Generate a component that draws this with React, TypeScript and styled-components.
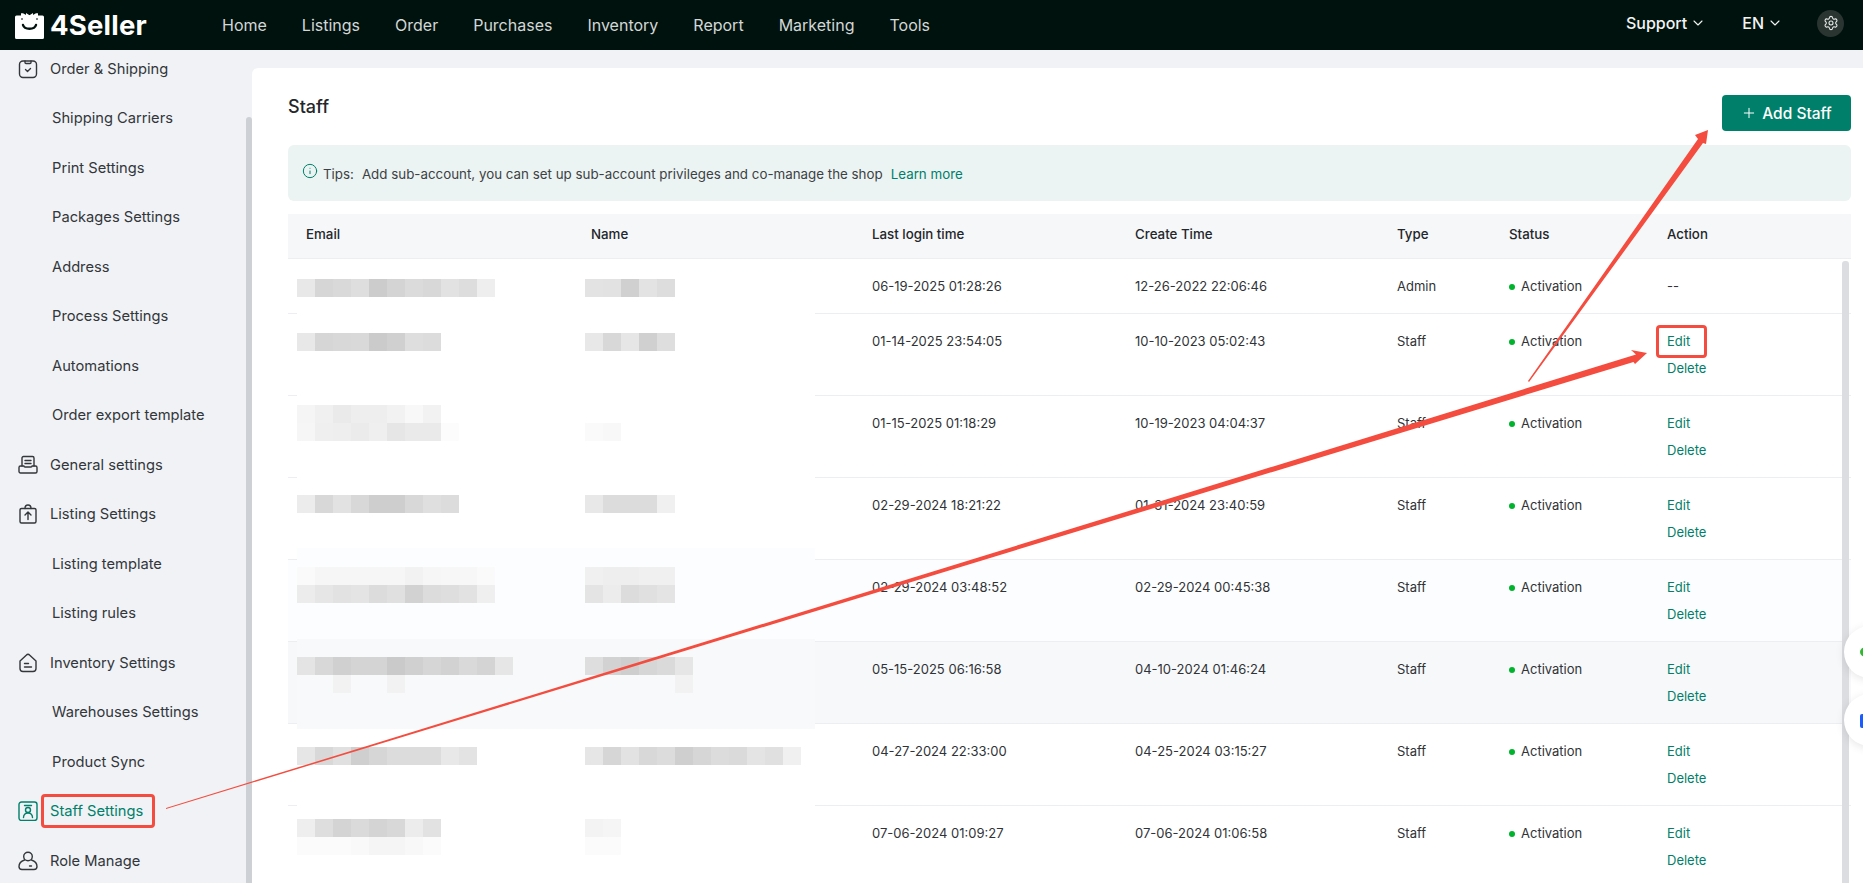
import React from 'react';
import styled, { createGlobalStyle } from 'styled-components';
import { ChevronDown, Plus, Settings, Info } from 'lucide-react';

const GlobalStyle = createGlobalStyle`
	html, body {
		margin: 0;
		height: 100%;
		overflow: hidden;
		background: #f0f2f6;
		font-family: Inter, 'Noto Sans', sans-serif;
	}
	*, *::before, *::after {
		box-sizing: border-box;
	}
`;

const Page = styled.div`
	position: relative;
	width: 1863px;
	height: 883px;
	overflow: hidden;
`;

const Header = styled.header`
	display: flex;
	align-items: center;
	height: 50px;
	padding-left: 15px;
	background: #00120e;
`;

const Brand = styled.div`
	display: flex;
	align-items: center;
	gap: 6px;
	width: 207px;
	color: #fff;
	font-size: 27.5px;
	font-weight: 700;
	letter-spacing: 0.2px;
`;

const Nav = styled.nav`
	display: flex;
	gap: 35px;
`;

const NavLink = styled.a`
	color: #d3d7d6;
	font-size: 16px;
	line-height: 45px;
`;

const HeaderRight = styled.div`
	display: flex;
	align-items: center;
	margin-left: auto;
	padding: 0 19px 4px 0;
	color: #f2f4f3;
	font-size: 16px;
	font-weight: 500;
`;

const Menu = styled.div<{ $gap: number }>`
	display: flex;
	align-items: center;
	gap: 3px;
	margin-right: ${(p) => p.$gap}px;
`;

const GearButton = styled.div`
	display: flex;
	align-items: center;
	justify-content: center;
	width: 27px;
	height: 27px;
	border-radius: 50%;
	background: #2a3532;
`;

const Body = styled.div`
	display: flex;
	height: 833px;
`;

const Sidebar = styled.aside`
	position: relative;
	flex: 0 0 252px;
	overflow: hidden;
`;

const SideList = styled.div`
	margin-top: -6.2px;
`;

const SideItem = styled.div<{ $sub?: boolean; $active?: boolean }>`
	display: flex;
	align-items: center;
	gap: 12px;
	height: 49.5px;
	padding-left: ${(p) => (p.$sub ? '52px' : '18px')};
	color: ${(p) => (p.$active ? '#00806a' : '#33363a')};
	font-size: 14.7px;
`;

const SideLabel = styled.span<{ $marked?: boolean }>`
	position: relative;
	${(p) =>
		p.$marked &&
		`
		&::after {
			content: '';
			position: absolute;
			left: -9px;
			right: -12px;
			top: -8px;
			bottom: -8px;
			border: 3px solid #f44c3e;
			border-radius: 4px;
		}
	`}
`;

const SideScrollbar = styled.div`
	position: absolute;
	top: 67px;
	bottom: 0;
	right: 0;
	width: 6px;
	background: #cdd0d4;
	border-radius: 3px 3px 0 0;
`;

const Panel = styled.main`
	flex: 1;
	margin-top: 18px;
	padding: 27px 12px 0 36px;
	background: #fff;
	border-radius: 6px 0 0 0;
`;

const TitleRow = styled.div`
	display: flex;
	justify-content: space-between;
	height: 36px;
`;

const Title = styled.h1`
	margin: 0;
	color: #23262a;
	font-size: 18px;
	font-weight: 500;
	line-height: 24px;
`;

const AddButton = styled.button`
	display: flex;
	align-items: center;
	justify-content: center;
	gap: 5px;
	width: 129px;
	height: 36px;
	padding: 0;
	border: 0;
	border-radius: 4px;
	background: #00806a;
	color: #fff;
	font-family: inherit;
	font-size: 15.5px;
	font-weight: 500;
`;

const Tips = styled.div`
	display: flex;
	align-items: center;
	height: 56px;
	margin-top: 14px;
	padding: 2px 0 0 14px;
	border-radius: 6px;
	background: #ebf4f2;
	color: #3d4145;
	font-size: 13.35px;
`;

const TipsIcon = styled(Info)`
	margin: -6px 5px 0 0;
	color: #00806a;
`;

const TipsLabel = styled.span`
	margin-right: 8px;
`;

const LearnMore = styled.a`
	margin-left: 8px;
	color: #00806a;
`;

const TableWrap = styled.div`
	position: relative;
	margin-top: 13px;
`;

const Cols = `
	display: grid;
	grid-template-columns: 285px 281px 263px 262px 112px 158px 202px;
`;

const HeadRow = styled.div`
	${Cols}
	align-items: center;
	height: 45px;
	padding-bottom: 4px;
	background: #f6f7f9;
	border-bottom: 1px solid #eceef2;
	color: #23262a;
	font-size: 13.3px;
	font-weight: 500;
`;

const HeadCell = styled.div`
	padding-left: 18px;
`;

const Row = styled.div<{ $bg?: string; $veil?: string; $veilTop?: string; $veilBottom?: string }>`
	${Cols}
	position: relative;
	padding: 14px 0 13px;
	background: ${(p) => p.$bg ?? 'transparent'};
	border-bottom: 1px solid #eceef2;
	color: #303337;
	font-size: 13px;
	line-height: 27px;
	&::before {
		content: '';
		position: absolute;
		left: 9px;
		width: 518px;
		top: ${(p) => p.$veilTop ?? '100%'};
		bottom: ${(p) => p.$veilBottom ?? '-1px'};
		background: ${(p) => p.$veil ?? '#fff'};
	}
`;

const Cell = styled.div`
	position: relative;
	z-index: 1;
	padding-left: 18px;
`;

const Mosaic = styled.div<{ $left: number; $top: number }>`
	display: flex;
	flex-direction: column;
	margin-left: ${(p) => p.$left}px;
	margin-top: ${(p) => p.$top}px;
`;

const MosaicRow = styled.div`
	display: flex;
	height: 18px;
`;

const MosaicCell = styled.span<{ $tone: string }>`
	width: 18px;
	height: 18px;
	background: ${(p) => (p.$tone ? `#${p.$tone}${p.$tone}${p.$tone}` : 'transparent')};
`;

const Status = styled.div`
	display: flex;
	align-items: center;
	gap: 6px;
`;

const Dot = styled.i`
	width: 6px;
	height: 6px;
	border-radius: 50%;
	background: #00b32c;
`;

const ActionLink = styled.a<{ $marked?: boolean }>`
	display: block;
	position: relative;
	width: fit-content;
	color: #00806a;
	${(p) =>
		p.$marked &&
		`
		&::after {
			content: '';
			position: absolute;
			left: -11px;
			width: 51px;
			top: -3px;
			height: 33px;
			border: 3px solid #f44c3e;
			border-radius: 4px;
		}
	`}
`;

const TableScrollbar = styled.div`
	position: absolute;
	z-index: 2;
	top: 47px;
	right: 2px;
	bottom: -400px;
	width: 7px;
	background: #dcdde0;
	border-radius: 3px;
`;

const FloatButton = styled.div<{ $top: number; $color: string; $square?: boolean }>`
	position: absolute;
	left: 1844px;
	top: ${(p) => p.$top}px;
	width: 52px;
	height: 52px;
	border-radius: 50%;
	background: #fff;
	box-shadow: 0 2px 10px rgba(0, 0, 0, 0.1);
	z-index: 3;
	&::after {
		content: '';
		position: absolute;
		left: 16px;
		top: ${(p) => (p.$square ? '20px' : '21px')};
		width: 12px;
		height: ${(p) => (p.$square ? '14px' : '10px')};
		border-radius: ${(p) => (p.$square ? '2px' : '50%')};
		background: ${(p) => p.$color};
	}
`;

const Annotations = styled.svg`
	position: absolute;
	inset: 0;
	z-index: 4;
	pointer-events: none;
`;

const Logo = () => (
	<svg width="29" height="27" viewBox="0 0 29 27">
		<path
			d="M1.5 3.5H6V1.2L8 1.2 12 3.5h5l4-2.3 2 0V3.5h4.5A1.5 1.5 0 0 1 29 5v20.5a1.5 1.5 0 0 1-1.5 1.5h-26A1.5 1.5 0 0 1 0 25.5V5a1.5 1.5 0 0 1 1.5-1.5z"
			fill="#fff"
		/>
		<path d="M11 1l3.5 2.2L18 1v5l-3.5-2L11 6z" fill="#fff" />
		<path d="M7 6v2M22 6v2" stroke="#00120e" strokeWidth="1" />
		<path d="M8 13c1.5 5 11.5 5 13 0" fill="none" stroke="#00120e" strokeWidth="2.4" strokeLinecap="round" />
	</svg>
);

const iconProps = {
	width: 20,
	height: 20,
	viewBox: '0 0 20 20',
	fill: 'none',
	stroke: 'currentColor',
	strokeWidth: 1.4,
	strokeLinecap: 'round' as const,
	strokeLinejoin: 'round' as const,
};

const OrderIcon = () => (
	<svg {...iconProps}>
		<rect x="1.5" y="2" width="17" height="16.5" rx="3.5" />
		<path d="M7 2v1.5a1 1 0 0 0 1 1h4a1 1 0 0 0 1-1V2" />
		<path d="M7.5 10.5l2 2 3-3" />
	</svg>
);

const GeneralIcon = () => (
	<svg {...iconProps}>
		<path d="M4 11V3a1.5 1.5 0 0 1 1.5-1.5h9A1.5 1.5 0 0 1 16 3v8" />
		<path d="M7 5.5h6M7 8.5h6" />
		<path d="M1 12.5A1.5 1.5 0 0 1 2.5 11H6a1 1 0 0 0 1 1h6a1 1 0 0 0 1-1h3.5A1.5 1.5 0 0 1 19 12.5v4A1.5 1.5 0 0 1 17.5 18h-15A1.5 1.5 0 0 1 1 16.5z" />
	</svg>
);

const ListingIcon = () => (
	<svg {...iconProps}>
		<rect x="2" y="4.5" width="16" height="14.5" rx="1.5" />
		<path d="M7 4.5C7 2.5 8 1 10 1s3 1.5 3 3.5" />
		<path d="M10 15.5v-7M7 11l3-3 3 3" />
	</svg>
);

const InventoryIcon = () => (
	<svg {...iconProps}>
		<path d="M2 8l6.5-6a2 2 0 0 1 3 0L18 8v7.5a3 3 0 0 1-3 3H5a3 3 0 0 1-3-3z" />
		<path d="M6.5 10.5h4M6.5 14h7" />
	</svg>
);

const StaffIcon = () => (
	<svg {...iconProps}>
		<rect x="1" y="1" width="18" height="18.5" rx="2.5" />
		<path d="M6.5 4.5h7" />
		<circle cx="10" cy="9" r="2.5" />
		<path d="M5.5 16.5c0-6 9-6 9 0" />
	</svg>
);

const RoleIcon = () => (
	<svg {...iconProps}>
		<circle cx="10" cy="5.5" r="4.3" />
		<path d="M6.5 9c-3 1-5.5 3.5-5.5 6.5 0 2 1 3 3 3h12c2 0 3-1 3-3 0-3-2.5-5.500-5.5-6.5" />
		<path d="M11.5 15h2" />
	</svg>
);

const navItems = ['Home', 'Listings', 'Order', 'Purchases', 'Inventory', 'Report', 'Marketing', 'Tools'];

const sideItems: { label: string; icon?: React.ReactNode; active?: boolean }[] = [
	{ label: 'Order & Shipping', icon: <OrderIcon /> },
	{ label: 'Shipping Carriers' },
	{ label: 'Print Settings' },
	{ label: 'Packages Settings' },
	{ label: 'Address' },
	{ label: 'Process Settings' },
	{ label: 'Automations' },
	{ label: 'Order export template' },
	{ label: 'General settings', icon: <GeneralIcon /> },
	{ label: 'Listing Settings', icon: <ListingIcon /> },
	{ label: 'Listing template' },
	{ label: 'Listing rules' },
	{ label: 'Inventory Settings', icon: <InventoryIcon /> },
	{ label: 'Warehouses Settings' },
	{ label: 'Product Sync' },
	{ label: 'Staff Settings', icon: <StaffIcon />, active: true },
	{ label: 'Role Manage', icon: <RoleIcon /> },
];

type Staff = {
	email: string[][];
	emailTop: number;
	name: string[][];
	nameTop: number;
	login: string;
	created: string;
	type: string;
	bg?: string;
	veil?: string;
	veilTop?: string;
	veilBottom?: string;
};

const tones = (s: string) => s.split(' ').map((t) => (t === '--' ? '' : t));

const staff: Staff[] = [
	{
		email: [tones('e8 d6 d9 de cc d4 db d8 e2 dd ee')],
		emailTop: 6,
		name: [tones('e3 e2 d0 e3 dd')],
		nameTop: 6,
		login: '06-19-2025 01:28:26',
		created: '12-26-2022 22:06:46',
		type: 'Admin',
	},
	{
		email: [tones('e8 d6 d8 d9 cb d0 de dc')],
		emailTop: 5,
		name: [tones('e8 d8 e6 d0 de')],
		nameTop: 5,
		login: '01-14-2025 23:54:05',
		created: '10-10-2023 05:02:43',
		type: 'Staff',
	},
	{
		email: [tones('f5 f0 ea ee ee f2 f8 f2'), tones('f6 ef ee eb ef e6 ea ea fc')],
		emailTop: -5,
		name: [tones('--'), tones('fa f8')],
		nameTop: -5,
		login: '01-15-2025 01:18:29',
		created: '10-19-2023 04:04:37',
		type: 'Staff',
	},
	{
		email: [tones('ec d8 e2 d8 ce ce d8 df dc')],
		emailTop: 3,
		name: [tones('e8 dc dc dc f0')],
		nameTop: 3,
		login: '02-29-2024 18:21:22',
		created: '01-31-2024 23:40:59',
		type: 'Staff',
	},
	{
		email: [tones('fa f6 f6 f6 f6 f6 f2 f6 f7 f7 fa'), tones('ec e6 e2 e4 dc e0 d2 dc de e2 ef')],
		emailTop: -7,
		name: [tones('f0 ee ee f0 f0'), tones('e4 ec dc e0 e4')],
		nameTop: -7,
		login: '02-29-2024 03:48:52',
		created: '02-29-2024 00:45:38',
		type: 'Staff',
		bg: '#fcfdfe',
		veil: '#fcfdfe',
		veilTop: '-12px',
		veilBottom: '-1px',
	},
	{
		email: [tones('e4 d8 d0 d4 d4 ca d0 d6 d2 d9 d4 e6'), tones('-- -- f2 -- -- f2')],
		emailTop: 1,
		name: [tones('de d2 ce d6 da e6'), tones('-- -- -- -- -- f2')],
		nameTop: 1,
		login: '05-15-2025 06:16:58',
		created: '04-10-2024 01:46:24',
		type: 'Staff',
		bg: '#f7f8fa',
		veil: '#f8f9fb',
		veilTop: '-3px',
		veilBottom: '-6px',
	},
	{
		email: [tones('e6 d8 e0 cf d6 dc dc dc e8 e3')],
		emailTop: 9,
		name: [tones('e6 d6 e2 d8 dc cf d6 dc da e4 e0 f0')],
		nameTop: 9,
		login: '04-27-2024 22:33:00',
		created: '04-25-2024 03:15:27',
		type: 'Staff',
	},
	{
		email: [tones('ee de d4 da d4 d8 ec e2'), tones('fb fb fb f9 f5 f5 f8 fb')],
		emailTop: -1,
		name: [tones('f3 f5'), tones('fb fb')],
		nameTop: -1,
		login: '07-06-2024 01:09:27',
		created: '07-06-2024 01:06:58',
		type: 'Staff',
	},
];

const Blur = ({ rows, left, top }: { rows: string[][]; left: number; top: number }) => (
	<Mosaic $left={left} $top={top}>
		{rows.map((cells, r) => (
			<MosaicRow key={r}>
				{cells.map((tone, c) => (
					<MosaicCell key={c} $tone={tone} />
				))}
			</MosaicRow>
		))}
	</Mosaic>
);

const App = function () {
	return (
		<Page>
			<GlobalStyle />
			<Header>
				<Brand>
					<Logo />
					4Seller
				</Brand>
				<Nav>
					{navItems.map((item) => (
						<NavLink key={item}>{item}</NavLink>
					))}
				</Nav>
				<HeaderRight>
					<Menu $gap={36}>
						Support
						<ChevronDown size={16} strokeWidth={1.6} />
					</Menu>
					<Menu $gap={34}>
						EN
						<ChevronDown size={16} strokeWidth={1.6} />
					</Menu>
					<GearButton>
						<Settings size={16} color="#e8ecea" strokeWidth={1.6} />
					</GearButton>
				</HeaderRight>
			</Header>
			<Body>
				<Sidebar>
					<SideList>
						{sideItems.map((item) => (
							<SideItem key={item.label} $sub={!item.icon} $active={item.active}>
								{item.icon}
								<SideLabel $marked={item.active}>{item.label}</SideLabel>
							</SideItem>
						))}
					</SideList>
					<SideScrollbar />
				</Sidebar>
				<Panel>
					<TitleRow>
						<Title>Staff</Title>
						<AddButton>
							<Plus size={16} strokeWidth={1.5} />
							Add Staff
						</AddButton>
					</TitleRow>
					<Tips>
						<TipsIcon size={16} strokeWidth={1.5} />
						<TipsLabel>Tips:</TipsLabel>
						<span>Add sub-account, you can set up sub-account privileges and co-manage the shop</span>
						<LearnMore>Learn more</LearnMore>
					</Tips>
					<TableWrap>
						<HeadRow>
							<HeadCell>Email</HeadCell>
							<HeadCell>Name</HeadCell>
							<HeadCell>Last login time</HeadCell>
							<HeadCell>Create Time</HeadCell>
							<HeadCell>Type</HeadCell>
							<HeadCell>Status</HeadCell>
							<HeadCell>Action</HeadCell>
						</HeadRow>
						{staff.map((person, i) => (
							<Row
								key={person.login}
								$bg={person.bg}
								$veil={person.veil}
								$veilTop={person.veilTop}
								$veilBottom={person.veilBottom}
							>
								<Cell>
									<Blur rows={person.email} left={-9} top={person.emailTop} />
								</Cell>
								<Cell>
									<Blur rows={person.name} left={-6} top={person.nameTop} />
								</Cell>
								<Cell>{person.login}</Cell>
								<Cell>{person.created}</Cell>
								<Cell>{person.type}</Cell>
								<Cell>
									<Status>
										<Dot />
										Activation
									</Status>
								</Cell>
								<Cell>
									{person.type === 'Admin' ? (
										'--'
									) : (
										<>
											<ActionLink $marked={i === 1}>Edit</ActionLink>
											<ActionLink>Delete</ActionLink>
										</>
									)}
								</Cell>
							</Row>
						))}
						<TableScrollbar />
					</TableWrap>
				</Panel>
			</Body>
			<FloatButton $top={626} $color="#2eb82e" />
			<FloatButton $top={694} $color="#1a5cff" $square />
			<Annotations width="1863" height="883" viewBox="0 0 1863 883">
				<polygon
					points="166,808 1636,354.5 1631,350 1647,353 1635,364 1633.5,362 166,809"
					fill="#f44c3e"
				/>
				<polygon
					points="1528,381 1698,139 1695,135 1708,130 1706,144 1703,143 1529,382"
					fill="#f44c3e"
				/>
			</Annotations>
		</Page>
	);
};

export default App;
